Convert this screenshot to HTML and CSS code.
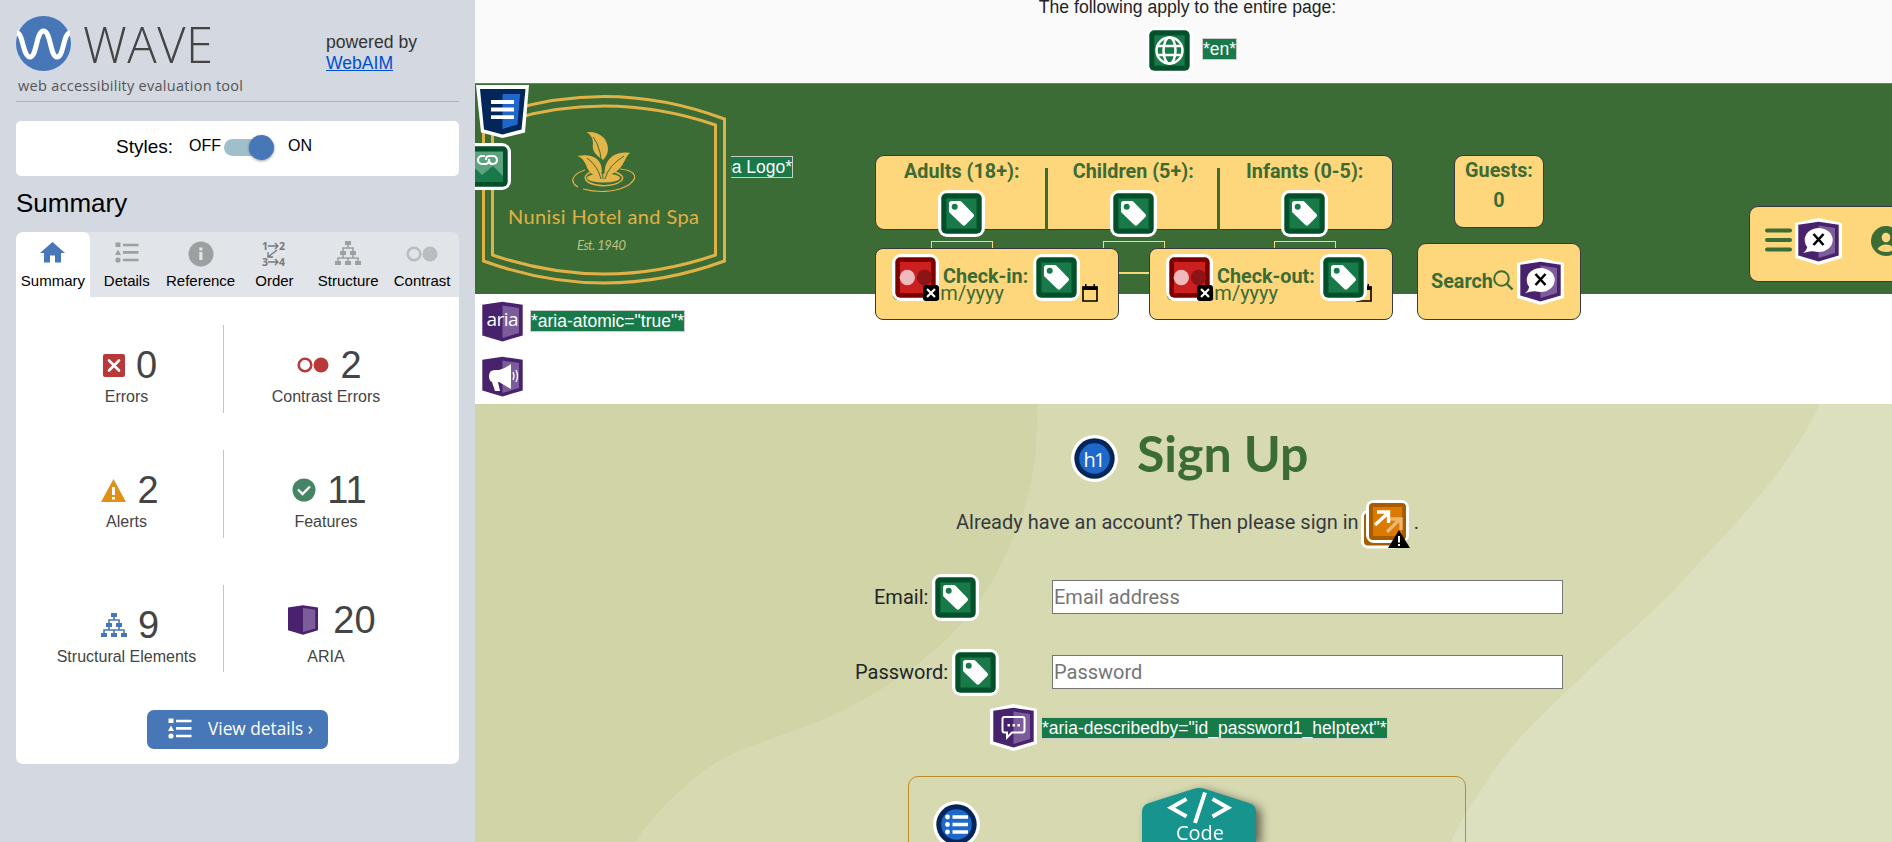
FILE: index.html
```html
<!DOCTYPE html>
<html lang="en">
<head>
<meta charset="utf-8">
<title>WAVE - Nunisi Hotel and Spa</title>
<link rel="stylesheet" href="styles.css">
</head>
<body>
<svg class="sprite" aria-hidden="true">
  <symbol id="tag" viewBox="0 0 47 47"><rect width="47" height="47" rx="9" fill="#fff"/><rect x="3.3" y="3.3" width="40.4" height="40.4" rx="5" fill="#034f2a"/><rect x="8.3" y="8.3" width="30.4" height="30.4" fill="#177a48" stroke="#0d6437"/><path d="M13.5 11h8.3q1 0 1.700.7L35.400 24q1.400 1.500 0 3l-8 8q-1.500 1.400-3 0L11.700 22.700Q11 22 11 21v-7.500Q11 11 13.500 11z" fill="#fff"/><circle cx="16.700" cy="16.700" r="3" fill="#177a48"/></symbol>
  <symbol id="contrast" viewBox="0 0 47 47"><rect width="47" height="47" rx="9" fill="#fff"/><rect x="3.300" y="3.300" width="40.400" height="40.400" rx="5" fill="#7d0000"/><rect x="8" y="8" width="31" height="31" fill="#cc1f20"/><circle cx="15.300" cy="23.500" r="7.700" fill="#f0b9bb"/><circle cx="32.500" cy="23.500" r="7.700" fill="#8c1316"/><rect x="31" y="31" width="16" height="16" rx="3" fill="#000"/><path d="M35 35l8 8m0-8l-8 8" stroke="#fff" stroke-width="2.200"/></symbol>
  <symbol id="aria" viewBox="0 0 47 47"><path d="M0 5L23.500 0 47 5V40L23.500 47 0 40z" fill="#fff"/><path d="M3.300 6.800L23.500 3.800 43.700 6.800V37.500L23.500 43.500 3.300 37.500z" fill="#48226c"/><path d="M23.500 7.500L40 10V35l-16.500 5z" fill="#7d5c9b"/></symbol>
  <symbol id="label" viewBox="0 0 47 47"><use href="#aria"/><ellipse cx="23.700" cy="22" rx="14" ry="12" fill="#fff"/><path d="M8 35q4-3 5-8l7 6q-5 0-12 2z" fill="#fff"/><path d="M18.500 16l10 11m0-11l-10 11" stroke="#000" stroke-width="2.600"/></symbol>
  <symbol id="tree" viewBox="0 0 26 24"><path d="M10 0h6v4h-6zM5 10h6v4H5zM15 10h6v4h-6zM0 20h6v4H0zM10 20h6v4h-6zM20 20h6v4h-6z" fill="currentColor"/><path d="M13 4v3M8 10V7h10v3M8 14v3m10-3v3M3 20v-3h20v3M13 17v3" fill="none" stroke="currentColor" stroke-width="1.600"/></symbol>
  <symbol id="list" viewBox="0 0 24 21"><path d="M.5.500h5v4.500h-5zM0 13L3 7.500 6 13z" fill="currentColor"/><circle cx="3" cy="18" r="2.600" fill="currentColor"/><path d="M8 3h15.500M8 10.400h15.500M8 18h15.500" stroke="currentColor" stroke-width="2.600"/></symbol>
  <symbol id="dots" viewBox="0 0 32 16"><circle cx="8" cy="8" r="6.300" fill="none" stroke="currentColor" stroke-width="2.600"/><circle cx="24" cy="8" r="7.500" fill="currentColor"/></symbol>
  <symbol id="calendar" viewBox="0 0 16 18"><path d="M1 3h14v14H1z" fill="none" stroke="currentColor" stroke-width="1.600"/><path d="M.5 2.500h15V6H.5zM3 0h1.500v3H3zM11.500 0H13v3h-1.500z" fill="currentColor"/></symbol>
</svg>

<div class="app">
<aside class="sidebar">
  <div class="top">
    <svg class="logo" width="230" height="84" viewBox="0 0 230 84">
      <circle cx="27.500" cy="27.500" r="27.500" fill="#4777b7"/>
      <path d="M1 17C7 17 7 41 14 41S20 15 27.500 15 34 41 41 41 47 17 54 17" fill="none" stroke="#fff" stroke-width="5"/>
      <text x="67" y="47" class="wave" textLength="130">WAVE</text>
      <text x="2" y="75" class="tagline" textLength="225">web accessibility evaluation tool</text>
    </svg>
    <p class="powered">powered by<br><a>WebAIM</a></p>
  </div>
  <div class="styles"><span class="s-label">Styles:</span><span class="s-off">OFF</span><span class="switch"></span><span class="s-on">ON</span></div>
  <h2>Summary</h2>
  <nav class="tabs">
    <div class="tab active"><svg width="25" height="26" viewBox="0 0 25 26"><path d="M12.500 1L25 12h-4v9.500h-6v-7h-5v7H4V12H0z" fill="#4777b7"/></svg><span>Summary</span></div>
    <div class="tab"><svg class="up" width="24" height="21"><use href="#list"/></svg><span>Details</span></div>
    <div class="tab"><svg width="26" height="26" viewBox="0 0 26 26"><circle cx="13" cy="13" r="12.500" fill="currentColor"/><path d="M11.300 6.500h3.200v3h-3.200zM11.300 11h3.200v8h-3.200z" fill="#e1e4e8"/></svg><span>Reference</span></div>
    <div class="tab"><svg width="26" height="26" viewBox="0 0 26 26"><g class="ord"><text x="1" y="8.500">1</text><text x="18" y="8.500">2</text><text x="1" y="25">3</text><text x="18" y="25">4</text></g><path d="M7 5h10M14 2l3 3-3 3M7 21h10m-3-3l3 3-3 3M16 9L7 16m0-5v5h5" fill="none" stroke="#74787b" stroke-width="1.300"/></svg><span>Order</span></div>
    <div class="tab"><svg width="26" height="24"><use href="#tree"/></svg><span>Structure</span></div>
    <div class="tab pale"><svg width="32" height="26"><use href="#dots"/></svg><span>Contrast</span></div>
  </nav>
  <div class="panel">
    <div class="grid">
      <div class="cell"><div class="num"><svg width="22" height="23" viewBox="0 0 22 23"><rect width="22" height="23" rx="2" fill="#b83939"/><path d="M6 6.500l10 10m0-10l-10 10" stroke="#fff" stroke-width="2.600" stroke-linecap="round"/></svg>0</div><div>Errors</div></div>
      <div class="cell"><div class="num red"><svg width="32" height="16"><use href="#dots"/></svg>2</div><div>Contrast Errors</div></div>
      <div class="cell"><div class="num"><svg width="25" height="23" viewBox="0 0 25 23"><path d="M12.500 0L25 23H0z" fill="#e28f17"/><path d="M11 8h3v8h-3zM11 18h3v2.500h-3z" fill="#fff"/></svg>2</div><div>Alerts</div></div>
      <div class="cell"><div class="num"><svg width="24" height="24" viewBox="0 0 24 24"><circle cx="12" cy="12" r="11.500" fill="#458464"/><path d="M6 11.500l4.500 4.500L18 8.500" fill="none" stroke="#fff" stroke-width="2.400"/></svg>11</div><div>Features</div></div>
      <div class="cell"><div class="num blue"><svg width="26" height="24"><use href="#tree"/></svg>9</div><div>Structural Elements</div></div>
      <div class="cell aria"><div class="num"><svg width="30" height="30" viewBox="3.300 3.500 40.400 40.400"><use href="#aria" width="47" height="47"/></svg>20</div><div>ARIA</div></div>
    </div>
    <button class="details"><svg width="24" height="21"><use href="#list"/></svg>View details ›</button>
  </div>
</aside>

<main class="page">
  <div class="banner">
    <p>The following apply to the entire page:</p>
    <div class="lang"><svg width="47" height="47" viewBox="0 0 47 47"><rect width="47" height="47" rx="9" fill="#fff"/><rect x="3.300" y="3.300" width="40.400" height="40.400" rx="5" fill="#034f2a"/><rect x="8.300" y="8.300" width="30.400" height="30.400" fill="#177a48"/><g fill="none" stroke="#fff" stroke-width="2.500"><circle cx="23.500" cy="23.500" r="13"/><ellipse cx="23.500" cy="23.500" rx="6" ry="13"/><path d="M12 19h23M12 28h23"/></g></svg><span class="note">*en*</span></div>
  </div>

  <header class="header">
    <svg class="brand" width="251" height="210" viewBox="475 84 251 210">
      <g fill="none" stroke="#e0b146" stroke-width="3"><path d="M483.500 119Q604 74 724.500 119V261Q604 305 483.500 261z"/><path d="M492.500 125Q604 87 715.500 125V255Q604 293 492.500 255z"/></g>
      <g fill="#e4b549"><path d="M603 160C594 154 592 150 593 143 593 138 590 134 586.500 132 600 131 608 139 608 149 608 154 605 158 603 160z"/><path d="M600 177C590 175 588 170 586 165 584 160 581 157 577.500 156 591 153 602 158 602 171z"/><path d="M605 176C603 163 612 150 630 153 624 157 624 173 605 176z"/><ellipse cx="603.500" cy="178" rx="16.500" ry="4.500"/></g>
      <g fill="none" stroke="#e0b146" stroke-width="1.200"><path d="M591 172C584 175 584 179 588 182 597 187 613 187 621 181 625 177 621 174 615 172" stroke-width="1.500"/><path d="M585 170C572 174 569 182 578 187M583 189C602 194 620 191 630 184 641 175 631 170 620 169"/></g>
      <path d="M587 158q11 8 14 21M624 156q-16 10-19 23M593 137q9 10 10 42" fill="none" stroke="#3c6c35" stroke-width="1"/>
      <text x="508" y="224" class="hotel" textLength="191">Nunisi Hotel and Spa</text>
      <text x="577" y="250" class="est" textLength="49">Est. 1940</text>
    </svg>
    <div class="alt"><span class="note">pa Logo*</span></div>
    <form class="booking">
      <div class="people">
        <div class="who"><b>Adults (18+):</b><svg class="m"><use href="#tag"/></svg><i class="qty"></i></div>
        <div class="who"><b>Children (5+):</b><svg class="m"><use href="#tag"/></svg><i class="qty"></i></div>
        <div class="who"><b>Infants (0-5):</b><svg class="m"><use href="#tag"/></svg><i class="qty"></i></div>
      </div>
      <div class="dates">
        <div class="date"><div class="line"><svg class="m"><use href="#contrast"/></svg><b>Check-in:</b><svg class="m"><use href="#tag"/></svg></div><div class="value"><span>dd/mm/yyyy</span><svg width="16" height="18"><use href="#calendar"/></svg></div></div>
        <div class="date out"><div class="line"><svg class="m"><use href="#contrast"/></svg><b>Check-out:</b><svg class="m"><use href="#tag"/></svg></div><div class="value"><span>dd/mm/yyyy</span><svg width="16" height="18"><use href="#calendar"/></svg></div></div>
      </div>
    </form>
    <div class="col">
      <div class="guests"><b>Guests:</b><b>0</b></div>
      <div class="search"><b>Search</b><svg class="lens" width="21" height="21" viewBox="0 0 21 21"><circle cx="8.500" cy="8.500" r="7.300" fill="none" stroke="#3c6c35" stroke-width="2"/><path d="M13.500 13.500l6 6" stroke="#3c6c35" stroke-width="2.400"/></svg><svg class="m"><use href="#label"/></svg></div>
    </div>
    <div class="menu"><svg width="27" height="24" viewBox="0 0 27 24"><path d="M2 2.500h23M2 12h23M2 21.500h23" stroke="#3c6c35" stroke-width="4" stroke-linecap="round"/></svg><svg class="m"><use href="#label"/></svg><svg class="user" width="30" height="30" viewBox="0 0 30 30"><circle cx="15" cy="15" r="15" fill="#3c6c35"/><ellipse cx="15" cy="11.500" rx="4.300" ry="4.800" fill="#fed67b"/><path d="M6.500 23q3-4.500 8.500-4.500t8.500 4.500Q20 26 15 26t-8.500-3z" fill="#fed67b"/></svg></div>
    <svg class="mark-header" width="53" height="53" viewBox="0 0 53 53"><path d="M0 0H53L49 47.500 26.500 53 5 47.500z" fill="#fff"/><path d="M4 4H49.500L45.500 44.500 26.500 49.500 8 44.500z" fill="#03265a"/><path d="M26.500 9H44L41.500 39.500l-15 4.500z" fill="#1f68cb"/><path d="M15 17h23M15 24.500h23M15 32.200h23" stroke="#fff" stroke-width="3.800"/></svg>
    <svg class="mark-image" width="36" height="47" viewBox="11 0 36 47"><rect width="47" height="47" rx="9" fill="#fff"/><rect x="3.300" y="3.300" width="40.400" height="40.400" rx="5" fill="#034f2a"/><rect x="8" y="8.500" width="31" height="30.500" fill="#5ba27f"/><path d="M8 29l4-3 6 6 11-9 10 10v6H8z" fill="#177a48"/><g fill="none" stroke="#fff" stroke-width="2.200"><path d="M21 13h-3a4 4 0 000 8h3q4 0 4-4v-1M26 13h3a4 4 0 010 8h-3M22 17v-1q0-3 4-3M25 17q0 4 4 4"/></g></svg>
  </header>

  <div class="live">
    <div class="row"><svg class="m" viewBox="0 0 47 47"><use href="#aria"/><text x="23.500" y="28" class="atxt" textLength="32">aria</text></svg><span class="note">*aria-atomic="true"*</span></div>
    <div class="row"><svg class="m" viewBox="0 0 47 47"><use href="#aria"/><path d="M32 11v25l-12-7h-1l2 9h-5l-3-9q-3-1-3-6 0-6 6-6h4q7-2 12-6z" fill="#fff"/><path d="M34 19q2 4 0 8M37 17q3 6 0 12" fill="none" stroke="#fff" stroke-width="1.300"/></svg></div>
  </div>

  <section class="signup">
    <svg class="waves" width="1417" height="438" viewBox="475 404 1417 438"><path d="M475 404H1037C1038 480 1025 515 1003 560 975 622 920 672 840 712 785 738 735 745 701 773 665 802 650 820 635 842H475z" fill="#d0d4a6"/><path d="M1820 404C1790 466 1750 508 1677 587 1635 630 1600 657 1582 677 1550 706 1515 740 1492 773 1472 803 1460 822 1451 842H1892V404z" fill="#dce0bf"/></svg>
    <div class="title"><svg width="47" height="47" viewBox="0 0 47 47"><circle cx="23.500" cy="23.500" r="23.500" fill="#fff"/><circle cx="23.500" cy="23.500" r="20.200" fill="#03265a"/><circle cx="23.500" cy="23.500" r="15.300" fill="#1f68cb"/><text x="23.500" y="32" class="h1t" textLength="22">h1</text></svg><h1>Sign Up</h1></div>
    <p class="intro"><span>Already have an account? Then please sign in</span><svg width="49" height="49" viewBox="0 0 49 49"><rect y="10" width="39" height="38.500" rx="7" fill="#fff"/><rect x="3" y="13" width="38" height="32.500" rx="4" fill="#a85c00"/><rect x="5" y="0" width="43" height="43" rx="8" fill="#fff"/><rect x="8" y="3" width="37" height="37" rx="4" fill="#a85c00"/><rect x="12" y="7" width="29" height="29" fill="#db7a00"/><path d="M26 32L39 19M28 19h12v11" fill="none" stroke="#edb66c" stroke-width="3.400"/><path d="M14 25L27 13M16 12h11.500v11" fill="none" stroke="#fff" stroke-width="3.400"/><path d="M38 30L49 48H27z" fill="#000"/><path d="M37 36h2v6.500h-2zM37 44h2v2h-2z" fill="#fff"/></svg><span>.</span></p>
    <div class="field email"><label>Email:</label><svg class="m"><use href="#tag"/></svg><input placeholder="Email address"></div>
    <div class="field password"><label>Password:</label><svg class="m"><use href="#tag"/></svg><input placeholder="Password"></div>
    <div class="described"><svg class="m" viewBox="0 0 47 47"><use href="#aria"/><path d="M14.500 13h18q2 0 2 2v11.500q0 2-2 2H22l-5 5v-5h-2.500q-2 0-2-2V15q0-2 2-2z" fill="none" stroke="#fff" stroke-width="2"/><path d="M17.500 20h2.500v2.500h-2.500zM22.500 20H25v2.500h-2.500zM27.500 20H30v2.500h-2.500z" fill="#fff"/></svg><span class="note">*aria-describedby="id_password1_helptext"*</span></div>
    <div class="help"><svg class="listmark" width="47" height="47" viewBox="0 0 47 47"><circle cx="23.500" cy="23.500" r="23.500" fill="#fff"/><circle cx="23.500" cy="23.500" r="20.200" fill="#03265a"/><circle cx="23.500" cy="23.500" r="15.300" fill="#1f68cb"/><g fill="#fff"><circle cx="14.500" cy="16" r="2.400"/><circle cx="14.500" cy="23.500" r="2.400"/><circle cx="14.500" cy="31" r="2.400"/><path d="M19.500 14.300h15.500v3.400H19.500zM19.500 21.800h15.500v3.400H19.500zM19.500 29.300h15.500v3.400H19.500z"/></g></svg></div>
  </section>
  <div class="code"><svg width="114" height="54" viewBox="0 0 114 54"><path d="M7 15L51 1q6-2 12 0l44 14q7 2 7 9v40H0V24q0-7 7-9z" fill="#17948e"/><path d="M44.500 11L29 19.700 44.500 28.500M70.500 11L86 19.700 70.500 28.500" fill="none" stroke="#fff" stroke-width="4"/><path d="M63 4.500L53 35" stroke="#fff" stroke-width="4"/><text x="34" y="52" class="ctext" textLength="48">Code</text></svg></div>
</main>
</div>
</body>
</html>
```
FILE: styles.css
```css
* { box-sizing: border-box; }
body { margin: 0; width: 1892px; height: 842px; overflow: hidden; font-family: "Liberation Sans", Arial, sans-serif; }
p, h1, h2 { margin: 0; font-weight: 400; }
svg { flex: none; display: block; }
.sprite { position: absolute; width: 0; height: 0; }
.app { display: flex; height: 842px; }
.m { width: 47px; height: 47px; }

/* Sidebar */
.sidebar { width: 475px; flex: none; background: #d4d8e0; padding: 16px 16px 0; }
.top { display: flex; height: 86px; border-bottom: 1px solid #adb1b6; }
.wave { font: 300 49px "Open Sans", sans-serif; fill: #444; }
.tagline { font: 14.500px "Open Sans", sans-serif; fill: #555; }
.powered { margin: 16px 0 0 80px; font-size: 17.600px; line-height: 21px; color: #333; }
.powered a { color: #0050d0; text-decoration: underline; }
.styles { margin-top: 19px; height: 55px; background: #fff; border-radius: 5px; padding: 12px 0 0 100px; display: flex; align-items: flex-start; line-height: 25px; }
.s-label { width: 73px; font-size: 19px; line-height: 27px; }
.s-off { width: 35px; }
.s-on { margin-left: 14px; }
.switch { width: 50px; height: 17px; margin-top: 6px; border-radius: 9px; background: #9fc0ca; position: relative; }
.switch::after { content: ""; position: absolute; left: 25px; top: -4px; width: 25px; height: 25px; border-radius: 50%; background: #4777b7; box-shadow: 0 1px 3px #0006; }
.sidebar h2 { margin: 12px 0 14px; font-size: 26px; line-height: 30px; }
.tabs { height: 65px; display: grid; grid-template-columns: repeat(6, 1fr); background: #e1e4e8; border-radius: 7px 7px 0 0; }
.tab { display: flex; flex-direction: column; align-items: center; padding-top: 9px; color: #9ba0a1; font-size: 15px; }
.tab span { color: #000; line-height: 18px; margin-top: auto; padding-bottom: 7px; height: 25px; }
.tab .up { margin-top: 1px; }
.tab.active { background: #fff; border-radius: 7px 7px 0 0; }
.tab.pale { color: #b9bdc0; }
.ord { font: 700 10.500px "Open Sans", sans-serif; fill: #74787b; }
.panel { height: 467px; background: #fff; border-radius: 0 0 7px 7px; padding-top: 28px; }
.grid { display: grid; grid-template-columns: 208px 207px; grid-template-rows: 88px 88px 87px; row-gap: 37px; }
.grid > :nth-child(n+5) { margin-top: 10px; margin-bottom: -10px; }
.cell { text-align: center; color: #444; font-size: 16px; line-height: 20px; padding-top: 19px; }
.cell:nth-child(odd) { border-right: 1px solid #c4c4c4; padding-left: 14px; }
.cell:nth-child(even) { padding-right: 3px; }
.num { height: 42px; margin-bottom: 1px; padding-left: 7px; display: flex; justify-content: center; align-items: center; gap: 11px; font-size: 38px; line-height: 42px; }
.red svg { color: #b83939; }
.blue svg { color: #4777b7; }
.aria .num { margin-top: -5px; margin-bottom: 6px; padding-left: 12px; gap: 15px; }
.details { display: flex; align-items: center; margin: 48px 0 0 131px; width: 181px; height: 39px; padding: 0 0 2px 21px; gap: 16px; border: 0; border-radius: 7px; background: #4777b7; color: #fff; font: 17.300px "Open Sans", sans-serif; white-space: nowrap; }

/* Evaluated page */
.page { flex: 1; min-width: 0; position: relative; overflow: hidden; background: #fff; font-family: Roboto, sans-serif; }
.banner { height: 84px; background: #fafafa; border-bottom: 1px solid #777; text-align: center; font: 17.600px/20px "Liberation Sans", sans-serif; color: #212529; display: flow-root; }
.banner p { margin: -3px 0 0 8px; }
.lang { display: flex; align-items: flex-start; gap: 9px; margin: 10px 0 0 671px; }
.lang .note { margin-top: 11px; }
.note { font: 17.500px/20px "Liberation Sans", sans-serif; background: #177a48; color: #fff; border: 1px solid #ccc; white-space: nowrap; }
.header { height: 210px; display: flex; position: relative; background: #3c6c35; color: #3c6c35; font-size: 20px; }
.header b { font-weight: 700; white-space: nowrap; }
.people b, .guests b, .search b, .line b { font-size: 19.800px; }
.hotel { font: 400 20px Lato, sans-serif; fill: #e0b146; }
.est { font: italic 400 13px Lato, sans-serif; fill: #bcc383; }
.alt { flex: none; margin: 72px 0 0 5px; width: 62px; height: 22px; overflow: hidden; display: flex; justify-content: flex-end; align-items: flex-start; }
.booking { width: 518px; margin: 71px 0 0 82px; flex: none; }
.people { height: 75px; display: flex; background: #fed67b; border: 1px solid #343a40; border-radius: 9px; }
.who { width: 171.500px; flex: none; display: flex; flex-direction: column; align-items: center; line-height: 26px; padding-top: 3px; position: relative; }
.who .m { margin-top: 5px; }
.who + .who::before { content: ""; position: absolute; left: -2.500px; top: 12px; width: 3px; height: 62px; background: #3c6c35; }
.qty { position: absolute; top: 85px; left: 55px; width: 62px; height: 33px; border: 1px solid #fed67b; }
.dates { margin-top: 18px; display: flex; justify-content: space-between; position: relative; }
.dates::before { content: ""; position: absolute; left: 244px; top: 24px; width: 30px; height: 1px; background: #fed67b; }
.date { width: 244px; height: 72px; background: #fed67b; border: 1px solid #343a40; border-radius: 8px; padding: 5px 0 0 16px; }
.line { display: flex; gap: 4px; line-height: 46px; position: relative; z-index: 1; }
.line b + .m { margin-left: 1px; }
.value { display: flex; margin: -22px 0 0; line-height: 28px; }
.value span { width: 190px; }
.value svg { color: #000; margin-top: 5px; }
.col { width: 164px; margin: 71px 0 0 24px; flex: none; }
.guests, .search { background: #fed67b; border: 1px solid #343a40; border-radius: 9px; }
.guests { width: 90px; height: 73px; margin-left: 37px; display: flex; flex-direction: column; align-items: center; line-height: 30px; }
.search { margin-top: 15px; height: 77px; display: flex; align-items: center; padding-left: 13px; }
.search .m { margin-left: 3px; }
.lens { margin-top: -3px; }
.menu { margin: 122px 0 0 168px; height: 76px; width: 200px; flex: none; background: #fed67b; border: 1px solid #343a40; border-radius: 9px; display: flex; align-items: flex-start; padding: 21px 0 0 15px; }
.menu .m { margin: -10px 0 0 3px; }
.user { margin: -2px 0 0 29px; }
.mark-header { position: absolute; left: 1px; top: 1px; }
.mark-image { position: absolute; left: 0; top: 59px; }
.live { height: 110px; padding: 4px 0 0 4px; }
.row { display: flex; align-items: center; height: 47px; gap: 4px; margin-bottom: 8px; }
.row .note { margin-top: -1px; }
.atxt { font: 19px "Open Sans", sans-serif; fill: #fff; text-anchor: middle; }

/* Sign up */
.signup { height: 438px; position: relative; background: #d7d9b1; padding-top: 20px; color: #212529; font-size: 20px; }
.waves { position: absolute; inset: 0; }
.signup > * + * { position: relative; }
.title { display: flex; align-items: flex-start; margin-left: 596px; height: 76px; }
.title svg { margin-top: 11px; }
.h1t { font: 20px "Open Sans", sans-serif; fill: #fff; text-anchor: middle; }
.title h1 { margin-left: 19px; font: 700 50px/58px Lato, sans-serif; color: #3c6c35; white-space: nowrap; }
.intro { display: flex; margin-left: 481px; line-height: 44px; color: #343a40; white-space: nowrap; }
.intro svg { margin: 0 4px 0 2px; }
.field { display: flex; align-items: center; height: 47px; }
.email { margin: 25px 0 0 399px; }
.password { margin: 28px 0 0 380px; }
.field .m { margin-left: 4px; }
.field label { margin-top: -1px; }
.field input { width: 511px; height: 34px; margin: -2px 0 0 73px; border: 1px solid #767676; padding: 0 1px; font: 20px Roboto, sans-serif; border-radius: 0; position: absolute; }
.email input { left: 105px; }
.password input { left: 124px; }
.described { display: flex; align-items: center; margin: 8px 0 0 515px; gap: 4px; height: 47px; }
.help { margin: 25px 0 0 433px; width: 558px; height: 110px; border: 1px solid #b98c26; border-radius: 10px; padding: 24px; }
.code { position: absolute; left: 667px; top: 788px; filter: drop-shadow(5px 3px 5px #0008); }
.ctext { font: 20px "Open Sans", sans-serif; fill: #fff; }
```
